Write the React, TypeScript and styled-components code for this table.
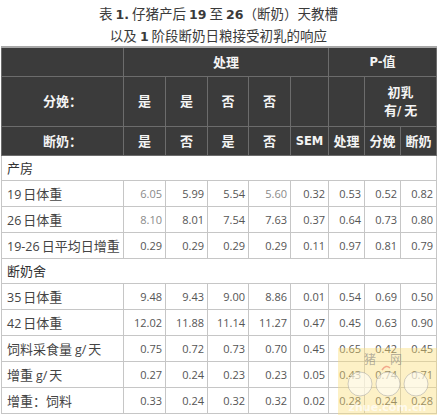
import React from "react";
import styled, { createGlobalStyle } from "styled-components";

const GlobalStyle = createGlobalStyle`
  body {
    margin: 0;
    background: #ffffff;
  }
`;

const cjk = `"Noto Sans CJK SC", "Noto Sans", sans-serif`;
const latin = `"Open Sans", "Noto Sans CJK SC", sans-serif`;

const Page = styled.div`
  position: relative;
  width: 437px;
  height: 415px;
  overflow: hidden;
  background: #ffffff;
`;

const Title = styled.div`
  height: 46px;
  padding-top: 3px;
  box-sizing: border-box;
  text-align: center;
  font-family: ${cjk};
  font-size: 13.5px;
  line-height: 20px;
  color: #3a3a3a;
`;

const TitleNum = styled.span`
  font-family: "DejaVu Sans", sans-serif;
  font-weight: bold;
  font-size: 12.5px;
`;

const Table = styled.table`
  margin-left: 1px;
  width: 435px;
  border-collapse: collapse;
  table-layout: fixed;
  border-top: 2px solid #a8a8a8;
`;

const HeadRow = styled.tr<{ $h: number }>`
  height: ${(p) => p.$h}px;
  background: #3b3b3b;
`;

const HeadCell = styled.td`
  border: 1px solid #6c6c6c;
  padding: 0;
  text-align: center;
  vertical-align: middle;
  color: #f4f4f4;
  font-family: ${cjk};
  font-weight: bold;
  font-size: 13px;
  line-height: 18px;
`;

const HeadLatin = styled.span`
  font-family: "DejaVu Sans", sans-serif;
  font-size: 11.5px;
`;

const BodyRow = styled.tr<{ $h: number }>`
  height: ${(p) => p.$h}px;
`;

const SectionCell = styled.td`
  border: 1px solid #c6c6c6;
  padding: 0 0 0 5px;
  font-family: ${cjk};
  font-size: 13px;
  color: #333333;
  text-align: left;
`;

const LabelCell = styled.td`
  border: 1px solid #c6c6c6;
  padding: 0 0 0 5px;
  font-family: ${cjk};
  font-size: 13px;
  color: #444444;
  white-space: nowrap;
  overflow: hidden;
`;

const LabelNum = styled.span`
  font-family: ${latin};
  font-size: 12.5px;
  margin-right: 2px;
`;

const ValueCell = styled.td<{ $faint?: boolean }>`
  border: 1px solid #c6c6c6;
  padding: 0 3px 0 0;
  text-align: right;
  font-family: ${latin};
  font-size: 11px;
  color: ${(p) => (p.$faint ? "#8a8a8a" : "#555555")};
  white-space: nowrap;
`;

const Watermark = styled.div`
  position: absolute;
  left: 338px;
  top: 348px;
  width: 99px;
  height: 67px;
  background: rgba(250, 222, 120, 0.42);
  pointer-events: none;
`;

const MarkText = styled.div`
  position: absolute;
  left: 26px;
  top: 2px;
  font-family: ${cjk};
  font-size: 12px;
  color: rgba(120, 120, 120, 0.55);
  letter-spacing: 14px;
`;

const MarkSite = styled.div`
  position: absolute;
  left: 0;
  bottom: 1px;
  width: 99px;
  text-align: center;
  font-family: "DejaVu Sans", sans-serif;
  font-weight: bold;
  font-size: 11px;
  color: rgba(255, 255, 255, 0.7);
`;

const MarkFaces = styled.svg`
  position: absolute;
  left: 0;
  top: 14px;
`;

type Row = {
  label: React.ReactNode;
  values: string[];
  faint?: number[];
};

const farrowing: Row[] = [
  {
    label: (
      <>
        <LabelNum>19</LabelNum>日体重
      </>
    ),
    values: ["6.05", "5.99", "5.54", "5.60", "0.32", "0.53", "0.52", "0.82"],
    faint: [0, 3],
  },
  {
    label: (
      <>
        <LabelNum>26</LabelNum>日体重
      </>
    ),
    values: ["8.10", "8.01", "7.54", "7.63", "0.37", "0.64", "0.73", "0.80"],
    faint: [0],
  },
  {
    label: (
      <>
        <LabelNum>19-26</LabelNum>日平均日增重
      </>
    ),
    values: ["0.29", "0.29", "0.29", "0.29", "0.11", "0.97", "0.81", "0.79"],
  },
];

const nursery: Row[] = [
  {
    label: (
      <>
        <LabelNum>35</LabelNum>日体重
      </>
    ),
    values: ["9.48", "9.43", "9.00", "8.86", "0.01", "0.54", "0.69", "0.50"],
  },
  {
    label: (
      <>
        <LabelNum>42</LabelNum>日体重
      </>
    ),
    values: ["12.02", "11.88", "11.14", "11.27", "0.47", "0.45", "0.63", "0.90"],
  },
  {
    label: (
      <>
        饲料采食量 <LabelNum>g/</LabelNum>天
      </>
    ),
    values: ["0.75", "0.72", "0.73", "0.70", "0.45", "0.65", "0.42", "0.45"],
  },
  {
    label: (
      <>
        增重 <LabelNum>g/</LabelNum>天
      </>
    ),
    values: ["0.27", "0.24", "0.23", "0.23", "0.05", "0.43", "0.74", "0.71"],
  },
  {
    label: <>增重：饲料</>,
    values: ["0.33", "0.24", "0.32", "0.32", "0.02", "0.28", "0.24", "0.28"],
  },
];

const widths = [122, 42, 42, 41, 42, 38, 36, 36, 36];

function DataRows({ rows }: { rows: Row[] }) {
  return (
    <>
      {rows.map((row, i) => (
        <BodyRow $h={26} key={i}>
          <LabelCell>{row.label}</LabelCell>
          {row.values.map((v, j) => (
            <ValueCell key={j} $faint={row.faint?.includes(j)}>
              {v}
            </ValueCell>
          ))}
        </BodyRow>
      ))}
    </>
  );
}

export default function App() {
  return (
    <Page>
      <GlobalStyle />
      <Title>
        表 <TitleNum>1.</TitleNum> 仔猪产后 <TitleNum>19</TitleNum> 至{" "}
        <TitleNum>26</TitleNum>（断奶）天教槽
        <br />
        以及 <TitleNum>1</TitleNum> 阶段断奶日粮接受初乳的响应
      </Title>
      <Table>
        <colgroup>
          {widths.map((w, i) => (
            <col key={i} style={{ width: w }} />
          ))}
        </colgroup>
        <tbody>
          <HeadRow $h={29}>
            <HeadCell />
            <HeadCell colSpan={5}>处理</HeadCell>
            <HeadCell colSpan={3}>
              <HeadLatin>P-</HeadLatin>值
            </HeadCell>
          </HeadRow>
          <HeadRow $h={50}>
            <HeadCell>分娩：</HeadCell>
            <HeadCell>是</HeadCell>
            <HeadCell>是</HeadCell>
            <HeadCell>否</HeadCell>
            <HeadCell>否</HeadCell>
            <HeadCell />
            <HeadCell />
            <HeadCell colSpan={2}>
              初乳
              <br />
              有<HeadLatin>/</HeadLatin> 无
            </HeadCell>
          </HeadRow>
          <HeadRow $h={29}>
            <HeadCell>断奶：</HeadCell>
            <HeadCell>是</HeadCell>
            <HeadCell>否</HeadCell>
            <HeadCell>是</HeadCell>
            <HeadCell>否</HeadCell>
            <HeadCell>
              <HeadLatin>SEM</HeadLatin>
            </HeadCell>
            <HeadCell>处理</HeadCell>
            <HeadCell>分娩</HeadCell>
            <HeadCell>断奶</HeadCell>
          </HeadRow>
          <BodyRow $h={25}>
            <SectionCell colSpan={9}>产房</SectionCell>
          </BodyRow>
          <DataRows rows={farrowing} />
          <BodyRow $h={25}>
            <SectionCell colSpan={9}>断奶舍</SectionCell>
          </BodyRow>
          <DataRows rows={nursery} />
        </tbody>
      </Table>
      <Watermark>
        <MarkText>猪网</MarkText>
        <MarkFaces width="99" height="40" viewBox="0 0 99 40">
          <g fill="rgba(255,255,255,0.55)" stroke="rgba(150,150,150,0.45)" strokeWidth="1">
            <circle cx="22" cy="22" r="12" />
            <circle cx="50" cy="22" r="12" />
            <circle cx="78" cy="22" r="12" />
          </g>
          <path d="M44 8 q4 -6 8 -2" fill="none" stroke="rgba(235,120,100,0.6)" strokeWidth="1.5" />
        </MarkFaces>
        <MarkSite>zhue.com.cn</MarkSite>
      </Watermark>
    </Page>
  );
}
